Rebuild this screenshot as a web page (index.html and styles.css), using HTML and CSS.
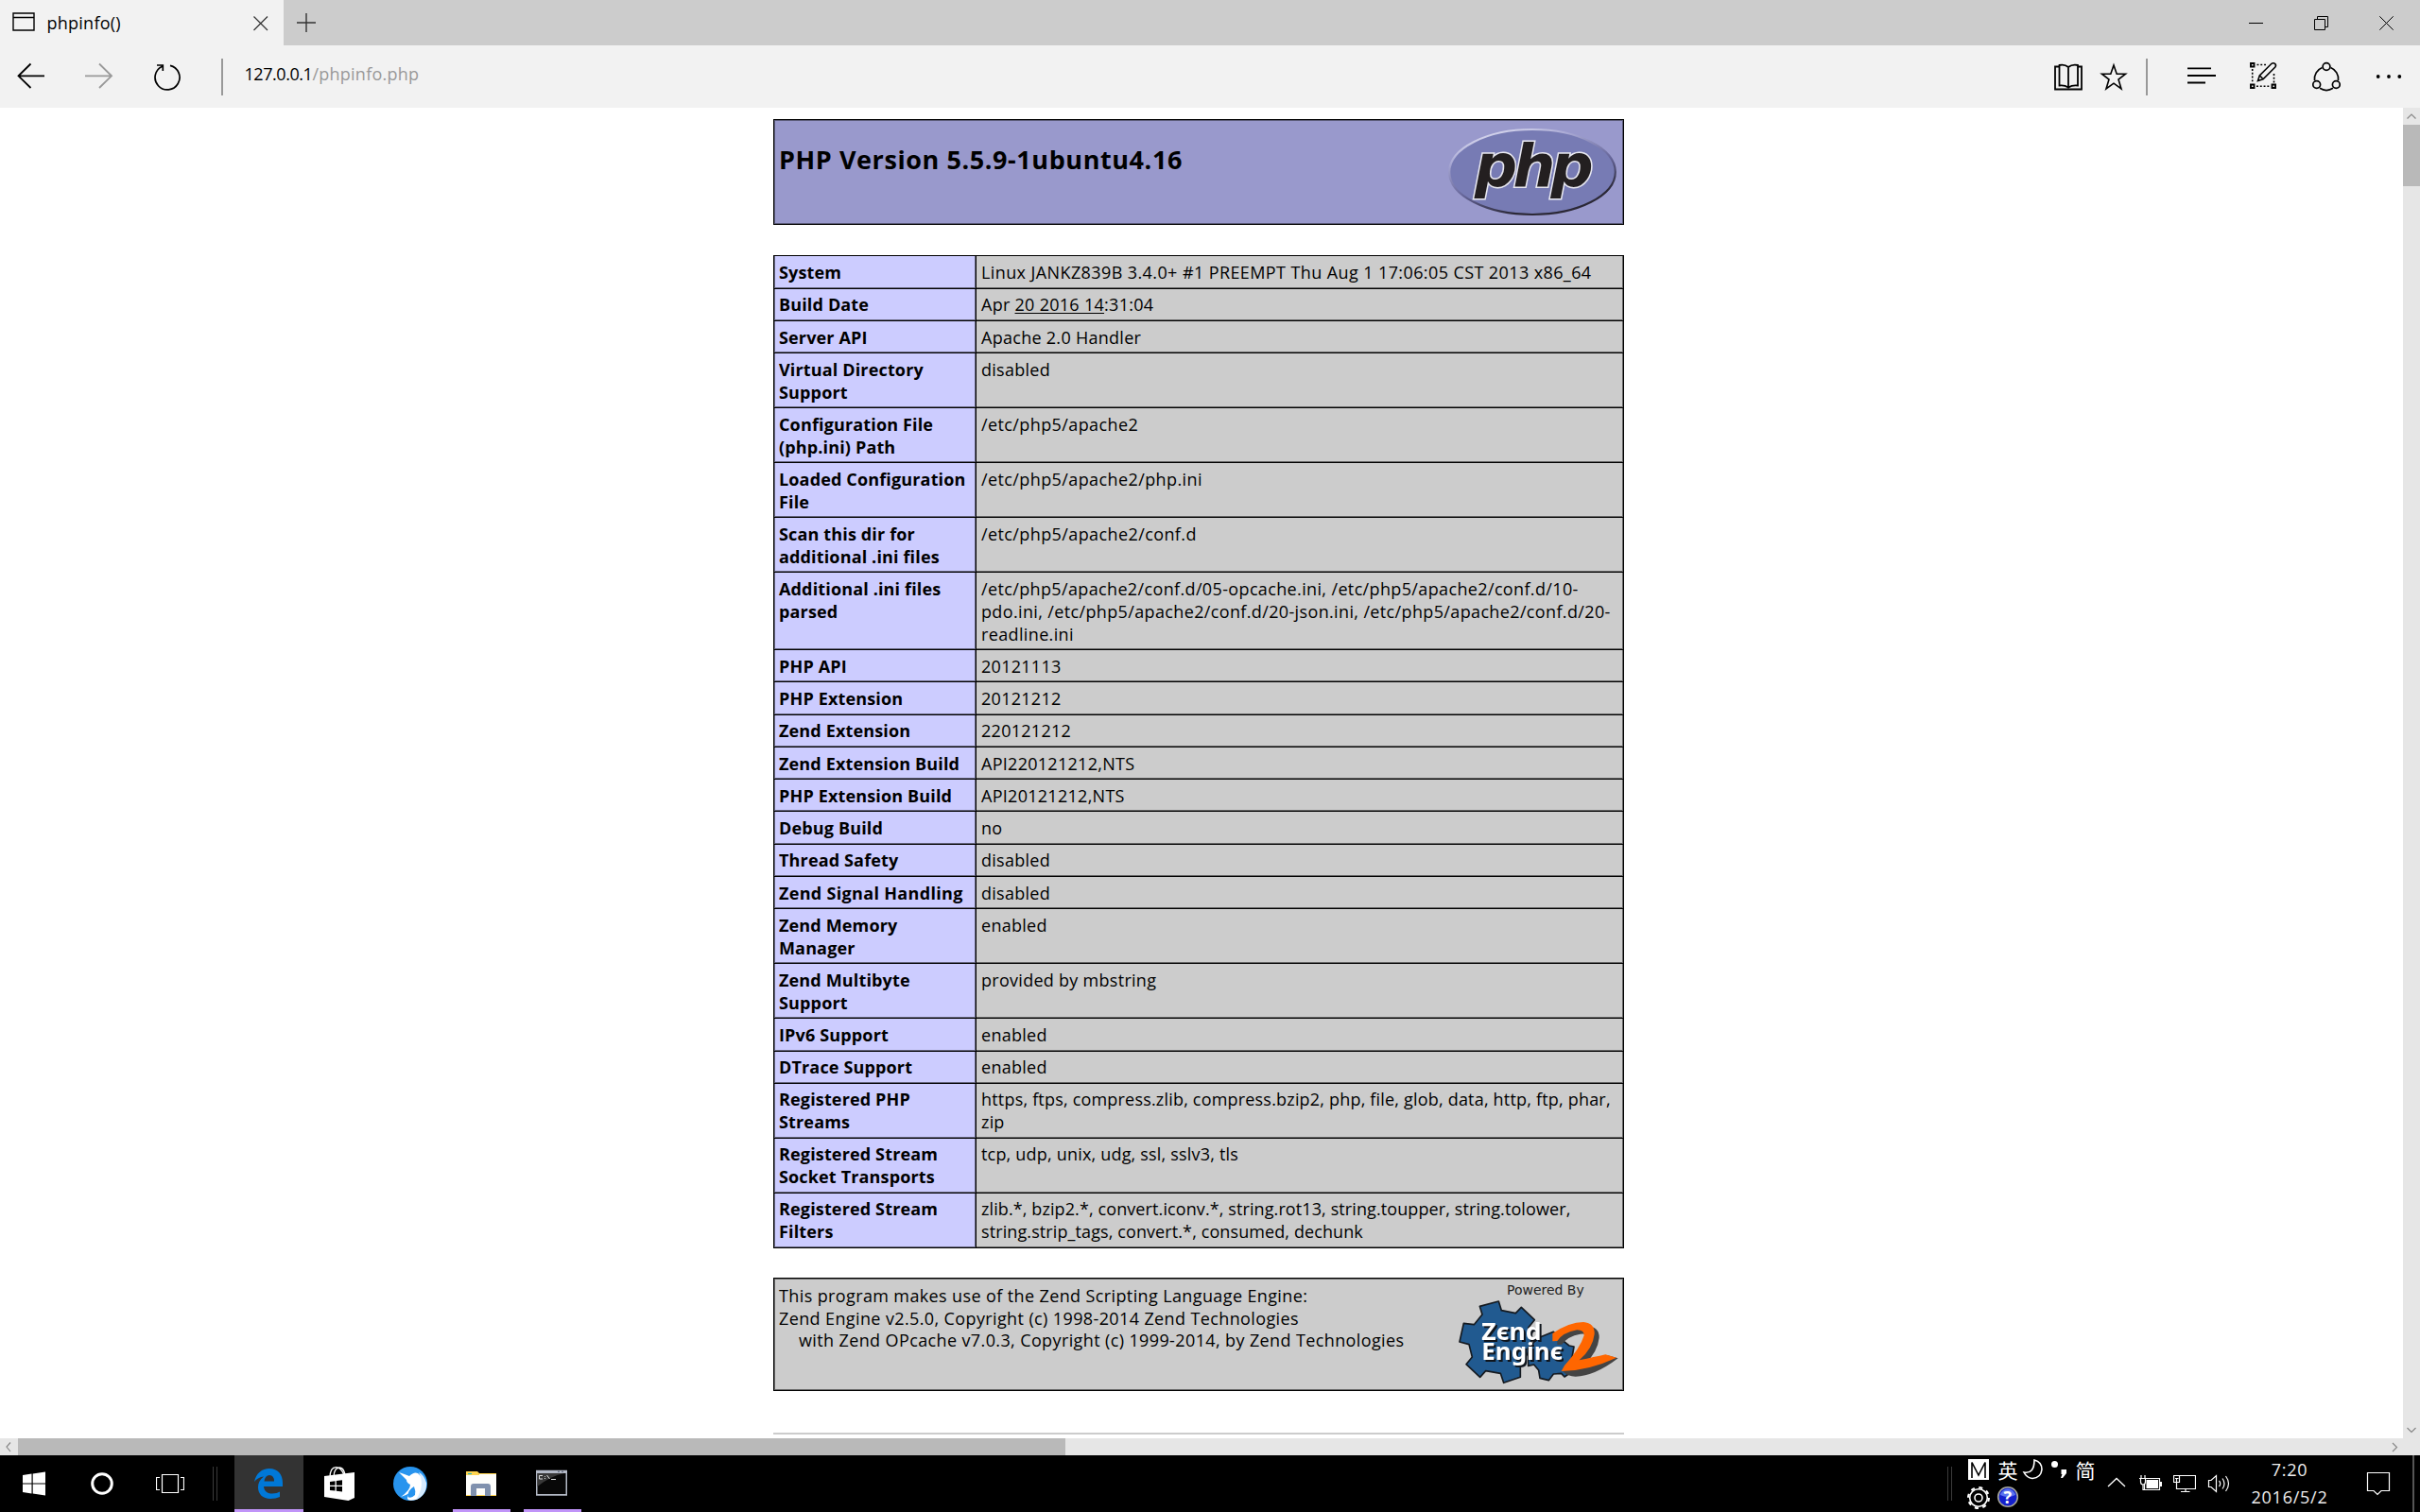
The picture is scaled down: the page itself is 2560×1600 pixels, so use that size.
FILE: index.html
```html
<!DOCTYPE html>
<html lang="en">
<head>
<meta charset="utf-8">
<title>phpinfo()</title>
<link rel="stylesheet" href="styles.css">
</head>
<body>
<div class="tabbar">
  <div class="tab">
    <svg class="favicon" width="24" height="48" viewBox="13 0 24 48"><path d="M14 14H36V32H14ZM14 18.5H36" fill="none" stroke="#000" stroke-width="1.4"/></svg>
    <span class="tab-title">phpinfo()</span>
    <svg width="16" height="48" viewBox="268 0 16 48"><path d="M268.5 17.5L283 32M283 17.5L268.5 32" stroke="#333" stroke-width="1.2"/></svg>
  </div>
  <svg class="new-tab" width="20" height="48" viewBox="314 0 20 48"><path d="M314 24H334M324 14V34" stroke="#333" stroke-width="1.4"/></svg>
  <div class="window-buttons">
    <svg width="15" height="48" viewBox="2379 0 15 48"><path d="M2379 24.5H2394" stroke="#000"/></svg>
    <svg width="15" height="48" viewBox="2448 0 15 48"><path d="M2448.5 20.5H2459.500V31.500H2448.500ZM2451.500 20.500V17.500H2462.500V28.500H2459.500" fill="none" stroke="#000"/></svg>
    <svg width="15" height="48" viewBox="2517 0 15 48"><path d="M2517.300 17.300L2531.700 31.700M2531.700 17.300L2517.300 31.700" stroke="#000"/></svg>
  </div>
</div>
<div class="toolbar">
  <svg class="back" width="30" height="66" viewBox="18 48 30 66"><path d="M47 80.300H19.500M32.500 67.500L19.500 80.300L32.500 93" fill="none" stroke="#000" stroke-width="1.8"/></svg>
  <svg class="forward" width="30" height="66" viewBox="90 48 30 66"><path d="M90 80.300H118M105 67.500L118 80.300L105 93" fill="none" stroke="#999" stroke-width="1.8"/></svg>
  <svg class="reload" width="30" height="66" viewBox="163 48 30 66"><path d="M181 69.300A13 13 0 1 1 172.500 70.200M167 69H173.300V75" fill="none" stroke="#000" stroke-width="1.700"/></svg>
  <i class="divider"></i>
  <div class="address"><span class="host">127.0.0.1</span><span class="path">/phpinfo.php</span></div>
  <svg class="book" width="30" height="66" viewBox="2173 48 30 66"><path d="M2178 70.500H2174V94.500H2202V70.500H2198M2188 71V92.500M2188 71Q2184 67.800 2178.500 69V90.500Q2184 89.800 2188 92.500Q2192 89.800 2198 90.500V69Q2192 67.800 2188 71" fill="none" stroke="#000" stroke-width="1.800"/></svg>
  <svg class="star" width="30" height="66" viewBox="2221 48 30 66"><path d="M2236 69L2239.200 78.200H2248.500L2241 84L2244 94L2236 88.200L2228 94L2231 84L2223.500 78.200H2232.800Z" fill="none" stroke="#000" stroke-width="1.600"/></svg>
  <i class="divider right"></i>
  <svg class="hub" width="30" height="66" viewBox="2314 48 30 66"><path d="M2314 72.300H2339M2314 80H2344M2314 87.500H2333" stroke="#000" stroke-width="1.800"/></svg>
  <svg class="note" width="30" height="66" viewBox="2380 48 30 66"><g fill="none" stroke="#000"><path d="M2381 67H2384.500V70.500H2381ZM2381 89.500H2384.500V93H2381ZM2403.500 89.500H2407V93H2403.500Z" stroke-width="1.900"/><path d="M2387.500 68.500H2398M2382.700 73V88M2387 91.300H2402M2405.500 78V88" stroke-width="1.600" stroke-dasharray="1.900 1.900"/><path d="M2388.500 85.500L2390.300 80L2403 67.300Q2405 66 2406.700 67.500Q2408.200 69.200 2406.800 71L2394 83.800ZM2391 80.500L2393.500 83" stroke-width="1.600"/></g></svg>
  <svg class="share" width="30" height="66" viewBox="2446 48 30 66"><g fill="none" stroke="#000" stroke-width="1.700"><path d="M2456.500 71.500A13 13 0 0 0 2448.500 85M2465.500 71.500A13 13 0 0 1 2473.500 85M2454 93.300A13 13 0 0 0 2468 93.300"/><circle cx="2461" cy="70.500" r="3.900"/><circle cx="2450.700" cy="89.500" r="3.900"/><circle cx="2471.300" cy="89.500" r="3.900"/></g></svg>
  <svg class="more" width="30" height="66" viewBox="2512 48 30 66"><circle cx="2515.700" cy="81" r="1.900"/><circle cx="2527" cy="81" r="1.900"/><circle cx="2538.300" cy="81" r="1.900"/></svg>
</div>
<div class="viewport">
  <main class="page">
    <header class="banner">
      <h1>PHP Version 5.5.9-1ubuntu4.16</h1>
      <svg width="180" height="94" viewBox="1532 135 180 94">
        <defs><linearGradient id="rim" x1="0.250" y1="0" x2="0.750" y2="1"><stop offset="0" stop-color="#dcdcf0"/><stop offset="0.220" stop-color="#a9a9d4"/><stop offset="0.550" stop-color="#66669a"/><stop offset="0.850" stop-color="#2b2836"/></linearGradient></defs>
        <ellipse cx="1622" cy="182" rx="87.800" ry="45" fill="#777bb4" stroke="url(#rim)" stroke-width="2.200"/>
        <text class="php-word" x="1561" y="196.500">php</text>
      </svg>
    </header>
    <div class="info">
      <div class="row tall"><b>System</b><span class="wide">Linux JANKZ839B 3.4.0+ #1 PREEMPT Thu Aug 1 17:06:05 CST 2013 x86_64</span></div>
      <div class="row up"><b>Build Date</b><span>Apr <u>20 2016 14</u>:31:04</span></div>
      <div class="row"><b>Server API</b><span>Apache 2.0 Handler</span></div>
      <div class="row two"><b>Virtual Directory<br>Support</b><span>disabled</span></div>
      <div class="row two"><b>Configuration File<br>(php.ini) Path</b><span class="wide">/etc/php5/apache2</span></div>
      <div class="row two"><b>Loaded Configuration<br>File</b><span class="wide">/etc/php5/apache2/php.ini</span></div>
      <div class="row two"><b>Scan this dir for<br>additional .ini files</b><span class="wide">/etc/php5/apache2/conf.d</span></div>
      <div class="row three"><b>Additional .ini files<br>parsed</b><span class="wide paths">/etc/php5/apache2/conf.d/05-opcache.ini, /etc/php5/apache2/conf.d/10-<br>pdo.ini, /etc/php5/apache2/conf.d/20-json.ini, /etc/php5/apache2/conf.d/20-<br>readline.ini</span></div>
      <div class="row"><b>PHP API</b><span>20121113</span></div>
      <div class="row tall"><b>PHP Extension</b><span>20121212</span></div>
      <div class="row up"><b>Zend Extension</b><span>220121212</span></div>
      <div class="row"><b>Zend Extension Build</b><span>API220121212,NTS</span></div>
      <div class="row"><b>PHP Extension Build</b><span>API20121212,NTS</span></div>
      <div class="row tall"><b>Debug Build</b><span>no</span></div>
      <div class="row up"><b>Thread Safety</b><span>disabled</span></div>
      <div class="row"><b class="loose">Zend Signal Handling</b><span>disabled</span></div>
      <div class="row two"><b>Zend Memory<br>Manager</b><span>enabled</span></div>
      <div class="row two"><b>Zend Multibyte<br>Support</b><span>provided by mbstring</span></div>
      <div class="row tall"><b>IPv6 Support</b><span>enabled</span></div>
      <div class="row up"><b>DTrace Support</b><span>enabled</span></div>
      <div class="row two up"><b>Registered PHP<br>Streams</b><span class="narrow">https, ftps, compress.zlib, compress.bzip2, php, file, glob, data, http, ftp, phar,<br>zip</span></div>
      <div class="row two up"><b>Registered Stream<br>Socket Transports</b><span class="narrow">tcp, udp, unix, udg, ssl, sslv3, tls</span></div>
      <div class="row two up"><b>Registered Stream<br>Filters</b><span class="narrower">zlib.*, bzip2.*, convert.iconv.*, string.rot13, string.toupper, string.tolower,<br>string.strip_tags, convert.*, consumed, dechunk</span></div>
    </div>
    <footer class="zend">
      <p>This program makes use of the Zend Scripting Language Engine:<br>Zend Engine v2.5.0, Copyright (c) 1998-2014 Zend Technologies<br><span class="indent">with Zend OPcache v7.0.3, Copyright (c) 1999-2014, by Zend Technologies</span></p>
      <svg width="175" height="112" viewBox="180 75 525 336">
        <text class="powered" x="342" y="121" textLength="245" lengthAdjust="spacingAndGlyphs">Powered By</text>
        <g fill="#215a90" stroke="#151a20" stroke-width="5" stroke-linejoin="round">
          <path d="M256 157L316 141L325 170L370 179L388 160L430 200L410 225L422 258L412 300L385 345L385 382L332 400L322 370L275 362L257 382L213 341L232 318L222 278L192 270L205 211L238 215L264 183Z"/>
          <path d="M440 258L490 238L515 262L540 282L555 285L548 325L538 372L525 381L515 370L490 372L475 392L447 385L443 360L428 342L410 346L410 290Z"/>
        </g>
        <path d="M502 279L502 251Q550 218 595 219Q637 222 635 257Q630 302 590 340Q640 324 660 312L695 322Q620 379 560 380Q535 380 520 364L540 355Q590 304 598 257Q598 242 575 245Q535 252 517 278Z" fill="#444"/>
        <g class="zend-words"><text x="262" y="263" textLength="190" lengthAdjust="spacingAndGlyphs">Zєnd</text><text x="262" y="327" textLength="258" lengthAdjust="spacingAndGlyphs">Enginє</text></g>
        <path d="M487 268L487 243Q540 207 585 207Q622 210 620 245Q615 290 572 328Q620 318 655 310L690 320Q600 362 515 363L525 345Q575 290 587 250Q588 232 565 232Q520 240 502 267Z" fill="#ff6600"/>
      </svg>
    </footer>
    <hr>
  </main>
  <div class="vscroll">
    <svg width="18" height="18" viewBox="0 0 18 18"><path d="M4.500 11.500L9 7L13.500 11.500" fill="none" stroke="#888" stroke-width="1.200"/></svg>
    <i></i>
    <svg class="down" width="18" height="18" viewBox="0 0 18 18"><path d="M4.500 7L9 11.500L13.500 7" fill="none" stroke="#888" stroke-width="1.200"/></svg>
  </div>
</div>
<div class="hscroll">
  <svg width="19" height="18" viewBox="0 0 19 18"><path d="M11 4.500L7 9L11 14" fill="none" stroke="#888" stroke-width="1.200"/></svg>
  <i></i>
  <svg class="end" width="18" height="18" viewBox="0 0 18 18"><path d="M7 5L11.500 9.500L7 14" fill="none" stroke="#888" stroke-width="1.200"/></svg>
</div>
<div class="taskbar">
  <svg class="start" width="24" height="60" viewBox="24 1540 24 60"><path d="M24 1561L33.500 1559.600V1569.400H24ZM34.700 1559.400L48 1557.600V1569.400H34.700ZM24 1570.500H33.500V1580.400L24 1579ZM34.700 1570.500H48V1582.400L34.700 1580.600Z" fill="#fff"/></svg>
  <svg class="cortana" width="26" height="60" viewBox="95 1540 26 60"><circle cx="108" cy="1570" r="10.300" fill="none" stroke="#fff" stroke-width="3"/></svg>
  <svg class="views" width="30" height="60" viewBox="165 1540 30 60"><path d="M171.500 1560.500H188.500V1579.500H171.500ZM169 1563.500H165.500V1576.500H169M191 1563.500H194.500V1576.500H191" fill="none" stroke="#fff" stroke-width="1.200"/></svg>
  <i class="grip"></i>
  <div class="task active"><svg width="73" height="60" viewBox="248 1540 73 60"><path d="M269 1568C271 1559 277 1554 285 1554C294 1554 299 1560.500 299 1569V1573H279C279.500 1579 284 1580.500 288 1580.500C291.500 1580.500 294 1579.500 296 1578.500V1584Q292 1586 286 1586C278 1586 273 1581 273 1574Q273 1567 279 1562.500Q273 1563 269 1568ZM279.500 1567.500H290Q290 1561 285 1561Q280.500 1561 279.500 1567.500Z" fill="#0078d7" fill-rule="evenodd"/></svg></div>
  <svg class="store" width="34" height="60" viewBox="342 1540 34 60"><path d="M343 1562L375 1558V1585L368.500 1588L343 1584Z" fill="#fff"/><path d="M349 1564C349 1556 352 1552.700 355.500 1552.700S362 1556 364 1561M353 1563C353 1556 356 1553 359 1553S364 1556 365 1560" fill="none" stroke="#fff" stroke-width="1.300"/><path d="M349 1568L354.500 1567.300V1571.800H349ZM355.800 1567.100L362 1566.200V1571.800H355.800ZM349 1573H354.500V1577.500L349 1577ZM355.800 1573H362V1578.600L355.800 1577.700Z" fill="#000"/></svg>
  <svg class="bird" width="36" height="60" viewBox="416 1540 36 60"><circle cx="434" cy="1570" r="18" fill="#2894ee"/><path d="M422 1558Q428 1560 433 1562Q438 1557 442 1559Q451 1566 450 1576Q447 1584 440 1587Q432 1589 431 1586Q431 1581 435 1579Q430 1582 424 1584Q434 1577 434 1571Q430 1569 430 1566Q426 1562 422 1558Z" fill="#fff"/><path d="M443 1558Q450 1572 440 1587Q452 1582 451 1569Q449 1561 443 1558Z" fill="#d4eaff"/><path d="M438 1573Q440 1578 439 1582Q435 1586 431.500 1584Q431 1577 438 1573Z" fill="#2894ee"/></svg>
  <div class="task folder"><svg width="61" height="60" viewBox="479 1540 61 60"><path d="M493 1557H505L507 1559H525V1583H493Z" fill="#ffd44f"/><path d="M493 1561H507V1560H525V1582L493 1582Z" fill="#fdfdfa"/><path d="M495 1559.500H499" stroke="#21b5c4" stroke-width="1.200"/><path d="M498 1583V1573Q498 1570 501 1570H516Q519 1570 519 1573V1583H513V1575H504V1583Z" fill="#8091ad"/></svg></div>
  <div class="task console"><svg width="61" height="60" viewBox="554 1540 61 60"><path d="M567 1555.700H600V1582.700H567Z" fill="#b3b9c6"/><path d="M568.500 1559H598.500V1581H568.500Z" fill="#080808"/><path d="M568.500 1559H597Q582 1562 568.500 1573Z" fill="#383838"/><path d="M574 1561.500H570.500V1565H574M576.500 1562V1562.800M576.500 1564V1565M578.500 1561L581.500 1565M583 1565.500H588" fill="none" stroke="#ddd" stroke-width="1"/><path d="M590 1557.300H592M594 1557.300H596" stroke="#4c556b"/></svg></div>
  <i class="grip tray-grip"></i>
  <svg class="ime" width="140" height="60" viewBox="2080 1540 140 60">
    <rect x="2082" y="1544" width="22" height="22" fill="#fff"/>
    <path d="M2086 1564V1547.500L2093 1561L2100 1547.500V1564" fill="none" stroke="#000" stroke-width="1.600"/>
    <text x="2113.500" y="1564.300">英</text><text x="2195.500" y="1564.300">简</text>
    <path d="M2152 1545Q2160 1547 2160 1555Q2159 1564 2150 1564.500Q2144 1564 2141 1558Q2152 1560 2152 1545Z" fill="none" stroke="#fff" stroke-width="1.600"/>
    <circle cx="2173.500" cy="1549.500" r="3.500" fill="#fff"/><path d="M2180.500 1555H2186V1559L2182 1564H2180L2181.500 1560H2180.500Z" fill="#fff"/>
    <circle cx="2093" cy="1585" r="9.300" fill="none" stroke="#fff" stroke-width="1.600"/><circle cx="2093" cy="1585" r="10.900" fill="none" stroke="#fff" stroke-width="2.200" stroke-dasharray="4 4.560"/><circle cx="2093" cy="1585" r="4" fill="none" stroke="#fff" stroke-width="1.600"/>
    <circle cx="2124" cy="1584" r="10.300" fill="#1420cc" stroke="#a6a69a" stroke-width="1.600"/><path d="M2116 1582A8.200 8.200 0 0 1 2132 1582Q2124 1586 2116 1582Z" fill="#5b74f0"/>
    <text class="help" x="2119.600" y="1590.500">?</text>
  </svg>
  <svg class="up-arrow" width="20" height="60" viewBox="2229 1540 20 60"><path d="M2230 1573L2239 1564.500L2248 1573" fill="none" stroke="#fff" stroke-width="1.300"/></svg>
  <svg class="battery" width="24" height="60" viewBox="2263 1540 24 60"><path d="M2271 1564.500H2284.500V1576.500H2268.500V1571" fill="none" stroke="#fff" stroke-width="1.200"/><path d="M2270.500 1566H2283V1575H2270.500ZM2285 1568H2287V1573H2285Z" fill="#fff"/><path d="M2263 1564.500H2271M2265 1561V1564M2269 1561V1564M2264.500 1565V1568Q2264.500 1571 2267 1571Q2269.500 1571 2269.500 1568V1565M2267 1571V1576.500H2270" fill="none" stroke="#fff" stroke-width="1.200"/></svg>
  <svg class="network" width="24" height="60" viewBox="2299 1540 24 60"><path d="M2306 1561.500H2322.500V1575.500H2302.500V1569M2299.500 1561.500H2305.500V1568.500H2299.500ZM2301 1564.500H2304.500M2302.500 1564V1568M2312 1576V1578.500M2307 1578.500H2316.500" fill="none" stroke="#fff" stroke-width="1.200"/></svg>
  <svg class="sound" width="24" height="60" viewBox="2335 1540 24 60"><path d="M2336.500 1566.500H2339L2344.500 1561.500V1578.500L2339 1573.500H2336.500ZM2347.500 1567Q2350 1570 2347.500 1573M2351 1564.500Q2355 1570 2351 1575.500M2354.500 1562Q2360.500 1570 2354.500 1578" fill="none" stroke="#fff" stroke-width="1.200"/></svg>
  <div class="clock">7:20<br>2016/5/2</div>
  <svg class="action" width="26" height="60" viewBox="2503 1540 26 60"><path d="M2504.500 1558.500H2527.500V1577.500H2519L2515 1581.500L2511 1577.500H2504.500Z" fill="none" stroke="#fff" stroke-width="1.200"/></svg>
  <i class="desktop-edge"></i>
</div>
</body>
</html>
```
FILE: styles.css
```css
* { box-sizing: border-box; }
body {
  margin: 0;
  width: 2560px;
  height: 1600px;
  display: flex;
  flex-direction: column;
  overflow: hidden;
  background: #fff;
  color: #000;
  font: 18px/24px "Open Sans", "Noto Sans CJK SC", sans-serif;
}
svg { display: block; flex: none; }
i { display: block; flex: none; }

/* tab strip */
.tabbar { display: flex; height: 48px; background: #ccc; }
.tab { display: flex; width: 300px; padding: 0 16px 0 13px; background: #f2f2f2; }
.tab-title { flex: 1; padding: 12px 0 0 12.5px; letter-spacing: 0.25px; }
.new-tab { margin-left: 14px; }
.window-buttons { display: flex; gap: 54px; margin-left: auto; padding-right: 28px; }

/* navigation toolbar */
.toolbar { display: flex; height: 66px; background: #f2f2f2; }
.back { margin-left: 18px; }
.forward { margin-left: 42px; }
.reload { margin-left: 42px; }
.divider { width: 2px; height: 39px; margin: 14px 0 0 42px; background: #999; }
.address { flex: 1; padding: 18px 0 0 22.5px; white-space: nowrap; }
.host { letter-spacing: -0.45px; }
.path { color: #999; letter-spacing: 0.25px; }
.star { margin-left: 18px; }
.divider.right { margin-left: 19px; }
.hub { margin-left: 42px; }
.note, .share, .more { margin-left: 36px; }
.more { margin-right: 18px; }

/* document area */
.viewport { display: flex; height: 1408px; }
.page { width: 900px; margin: 12px auto 0 818px; }
.banner {
  display: flex;
  justify-content: space-between;
  height: 112px;
  padding: 8px 6px 0 5px;
  background: #9999cc;
  border: 1px solid #000;
  box-shadow: inset 0 0 0 1px #5c5c7a;
}
h1 { margin: 16px 0 0; font-size: 27px; line-height: 36px; font-weight: 700; letter-spacing: 0.58px; white-space: nowrap; }
.php-word {
  font: italic 700 63px "DejaVu Sans", sans-serif;
  letter-spacing: -4.7px;
  fill: #231f20;
  stroke: #e8e8f0;
  stroke-width: 3px;
  paint-order: stroke;
}

.info { margin-top: 32px; border: solid #000; border-width: 0 1px 1px; }
.row { display: flex; height: 34px; border-top: 1px solid #000; white-space: nowrap; }
.row.tall { height: 35px; }
.row.two { height: 58px; }
.row.three { height: 82px; }
.row b, .row span { padding-top: 5px; }
.row.up b, .row.up span { padding-top: 4px; }
.row b {
  width: 213px;
  padding-left: 5px;
  background: #ccccff;
  letter-spacing: 0.15px;
  box-shadow: inset -1px -1px #666680, inset 1px 0 #666680;
}
.row b.loose { letter-spacing: 0.32px; }
.row span {
  flex: 1;
  padding-left: 5px;
  background: #ccc;
  border-left: 1px solid #000;
  letter-spacing: 0.28px;
  box-shadow: inset -1px -1px #666;
}
.row span.wide { letter-spacing: 0.4px; }
.row span.paths { letter-spacing: 0.36px; }
.row span.narrow { letter-spacing: 0.19px; }
.row span.narrower { letter-spacing: 0.1px; }
.row u { text-decoration-thickness: 1px; text-underline-offset: 2px; text-decoration-skip-ink: none; }

.zend {
  display: flex;
  justify-content: space-between;
  height: 120px;
  margin-top: 31px;
  padding: 2px 2px 0 5px;
  background: #ccc;
  border: 1px solid #000;
  box-shadow: inset 0 0 0 1px #666;
}
.zend p { margin: 5px 0 0; line-height: 23.5px; letter-spacing: 0.38px; white-space: nowrap; }
.indent { padding-left: 21px; }
.powered { font: 40px "DejaVu Sans", sans-serif; fill: #222; }
.zend-words { filter: drop-shadow(6px 6px 0 #10151c); }
.zend-words text { font: 700 76px "Noto Sans", sans-serif; fill: #fff; }
hr { height: 2px; margin: 44px 0 0; border: 0; background: #ccc; }

/* scrollbars */
.vscroll { width: 18px; background: #e6e6e6; display: flex; flex-direction: column; }
.vscroll i { height: 65px; background: #b9b9b9; }
.down { margin-top: auto; }
.hscroll { display: flex; height: 18px; background: #e6e6e6; }
.hscroll i { width: 1108px; background: #b9b9b9; }
.end { margin-left: auto; margin-right: 18px; }

/* taskbar */
.taskbar { display: flex; height: 60px; background: #000; color: #eee; }
.start { margin-left: 24px; }
.cortana { margin-left: 47px; }
.views { margin-left: 44px; }
.grip { width: 5px; height: 36px; margin: 12px 0 0 30px; border: solid #3a3a3a; border-width: 0 1px; }
.task { border-bottom: 3px solid #c094f8; height: 60px; overflow: hidden; }
.active { margin-left: 18px; background: #333; }
.store { margin-left: 21px; }
.bird { margin-left: 40px; }
.folder { margin-left: 27px; }
.console { margin-left: 14px; }
.tray-grip { margin-left: auto; }
.ime { margin-left: 15px; }
.ime text { font: 21px "Noto Sans CJK SC", sans-serif; fill: #fff; }
.ime .help { font: 700 18px "Open Sans", sans-serif; }
.up-arrow { margin-left: 9px; }
.battery { margin-left: 14px; }
.network, .sound { margin-left: 12px; }
.clock { width: 100px; margin-left: 13px; padding-top: 1px; line-height: 29px; letter-spacing: 0.75px; text-align: center; }
.action { margin-left: 31px; }
.desktop-edge { width: 2px; margin: 0 6px 0 23px; background: #555; }
```
